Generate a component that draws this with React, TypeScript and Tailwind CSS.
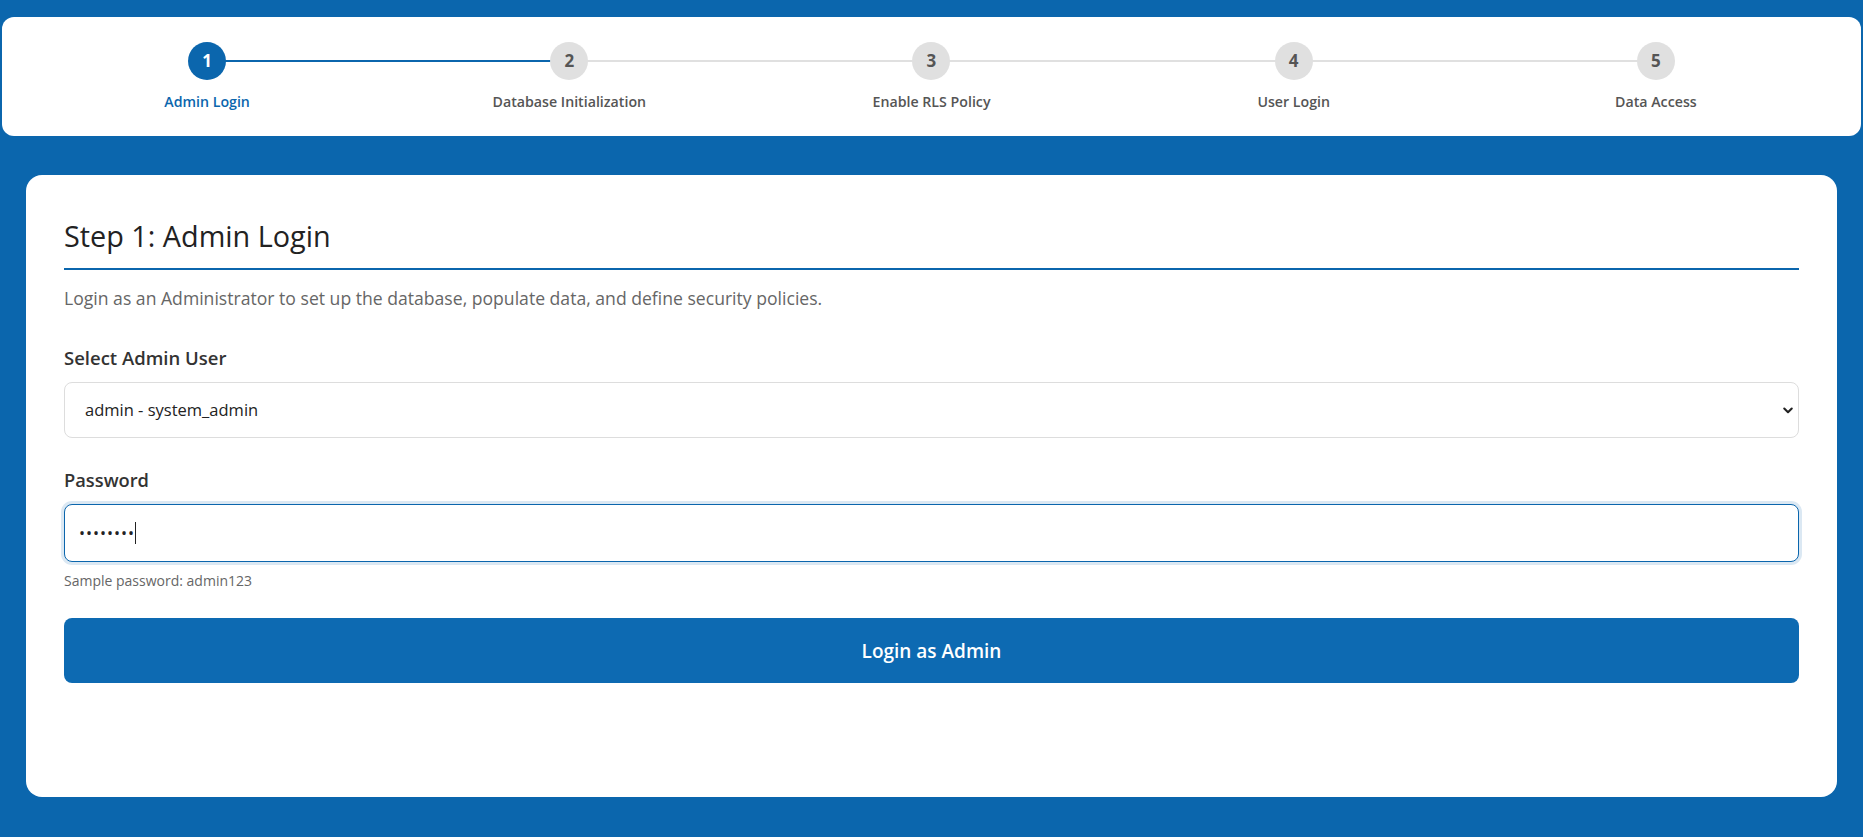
import React from 'react';

const steps = ['Admin Login', 'Database Initialization', 'Enable RLS Policy', 'User Login', 'Data Access'];

export default function App() {
  return (
    <div className="min-h-screen bg-[#0b66ad] pt-[17px] pb-10 font-['Open_Sans',sans-serif]">
      {/* Stepper */}
      <div className="mx-[2px] rounded-xl bg-white px-6 pt-[25px] pb-[24px]">
        <div className="grid grid-cols-5">
          {steps.map((label, i) => (
            <div key={label} className="relative flex flex-col items-center">
              {i < steps.length - 1 && (
                <div
                  className={
                    i === 0
                      ? 'absolute left-1/2 top-[18px] h-[2px] w-full bg-[#0b66ad]'
                      : 'absolute left-1/2 top-[18px] h-[2px] w-full bg-[#e0e0e0]'
                  }
                />
              )}
              <div
                className={
                  i === 0
                    ? 'relative z-10 flex h-[38px] w-[38px] items-center justify-center rounded-full bg-[#0b66ad] text-[17px] font-bold text-white'
                    : 'relative z-10 flex h-[38px] w-[38px] items-center justify-center rounded-full bg-[#e0e0e0] text-[17px] font-bold text-[#555]'
                }
              >
                {i + 1}
              </div>
              <div
                className={
                  i === 0
                    ? 'mt-[11px] text-[14.2px] font-semibold text-[#0b66ad]'
                    : 'mt-[11px] text-[14.2px] font-semibold text-[#555]'
                }
              >
                {label}
              </div>
            </div>
          ))}
        </div>
      </div>

      {/* Step card */}
      <div className="mx-[26px] mt-[39px] min-h-[622px] rounded-2xl bg-white px-[38px] pt-[43px] pb-10">
        <h2 className="border-b-2 border-[#0b66ad] pb-[15px] text-[28.8px] leading-[35px] font-normal text-[#222]">
          Step 1: Admin Login
        </h2>
        <p className="mt-[15px] text-[17.6px] leading-[26px] text-[#666]">
          Login as an Administrator to set up the database, populate data, and define security policies.
        </p>

        <label className="mt-[34px] block text-[18.5px] leading-[26px] font-semibold text-[#333]">Select Admin User</label>
        <div className="relative mt-[11px]">
          <select className="h-[56px] w-full appearance-none rounded-lg border border-[#ddd] bg-white px-[20px] text-[16.5px] text-[#222] outline-none">
            <option>admin - system_admin</option>
          </select>
          <svg
            className="pointer-events-none absolute right-[5px] top-1/2 h-[12px] w-[12px] -translate-y-1/2"
            viewBox="0 0 16 16"
            fill="none"
            stroke="#222"
            strokeWidth="2.8"
            strokeLinecap="round"
            strokeLinejoin="round"
          >
            <path d="M3 6l5 5 5-5" />
          </svg>
        </div>

        <label className="mt-[29px] block text-[18.3px] leading-[26px] font-semibold text-[#333]">Password</label>
        <div className="mt-[11px] flex h-[58px] w-full items-center rounded-lg border border-[#0b66ad] bg-white px-[14px] shadow-[0_0_0_3px_rgba(11,102,173,0.15)]">
          <span className="text-[16px] tracking-[1px] text-[#222]">••••••••</span>
          <span className="h-[22px] w-px bg-[#222]" />
        </div>
        <p className="mt-[9px] text-[14px] leading-[20px] text-[#666]">Sample password: admin123</p>

        <button className="mt-[27px] h-[65px] w-full rounded-lg bg-[#0d6ab2] text-[19px] font-semibold text-white">
          Login as Admin
        </button>
      </div>
    </div>
  );
}
